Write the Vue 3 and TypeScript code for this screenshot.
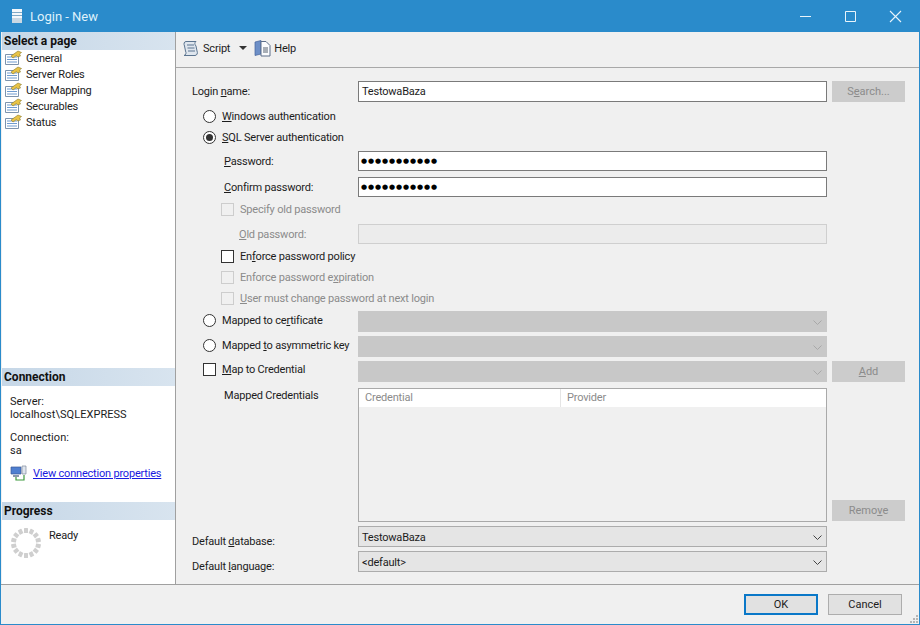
<script setup lang="ts">
const pages = ['General', 'Server Roles', 'User Mapping', 'Securables', 'Status']
const dots = '●●●●●●●●●●●'

// ring of small squares for the idle progress spinner
const spinner = Array.from({ length: 14 }, (_, i) => (360 / 14) * i)
</script>

<template>
  <div class="window">
    <header class="titlebar">
      <svg class="title-icon" width="14" height="16" viewBox="0 0 14 16">
        <path d="M2 1h10v14H2z" fill="#f4f8fb" />
        <path d="M2 4.5h10M2 7.5h10" stroke="#7fa9c6" stroke-width="1" />
        <path d="M2 10h10v5H2z" fill="#c9d8e3" />
      </svg>
      <span class="title-text">Login - New</span>
      <div class="win-buttons">
        <svg width="45" height="30" viewBox="0 0 45 30"><path d="M17 15.5h11" stroke="#e8f4fb" /></svg>
        <svg width="45" height="30" viewBox="0 0 45 30"><path d="M17.5 10.5h10v10h-10z" fill="none" stroke="#e8f4fb" /></svg>
        <svg width="45" height="30" viewBox="0 0 45 30"><path d="M17 10l11 11M28 10L17 21" stroke="#e8f4fb" stroke-width="1.1" /></svg>
      </div>
    </header>

    <div class="body">
      <aside class="sidebar">
        <div class="side-head">Select a page</div>
        <ul class="page-list">
          <li v-for="p in pages" :key="p">
            <svg width="17" height="16" viewBox="0 0 17 16">
              <path d="M.5 4.500h13v10H.5z" fill="#fff" stroke="#7d93ad" />
              <path d="M2 7h10M2 9.500h10M2 12h10" stroke="#6f9bd0" />
              <path d="M6 6l7-5 3.500 1.500-2 1.500 1 2-3 1-1-1.500L8 8z" fill="#e8c347" stroke="#8c7a2c" stroke-width=".6" />
            </svg>
            <span>{{ p }}</span>
          </li>
        </ul>

        <div class="side-head">Connection</div>
        <div class="conn">
          <div class="conn-group">Server:<br />localhost\SQLEXPRESS</div>
          <div class="conn-group">Connection:<br />sa</div>
          <div class="conn-link">
            <svg width="17" height="17" viewBox="0 0 17 17">
              <path d="M1 2h10v7H1z" fill="#4f7fd0" stroke="#3a5a9a" stroke-width=".7" />
              <path d="M3 10h6v2H3z" fill="#8a97ab" />
              <path d="M12 1h4v8h-4z" fill="#dfe5ee" stroke="#7e8a9c" stroke-width=".7" />
              <path d="M6 12v3h8v-5" fill="none" stroke="#3c9a3c" stroke-width="1.200" />
            </svg>
            <a class="link">View connection properties</a>
          </div>
        </div>

        <div class="side-head">Progress</div>
        <div class="progress">
          <svg width="32" height="32" viewBox="0 0 32 32">
            <rect
              v-for="a in spinner"
              :key="a"
              x="14"
              y="1"
              width="4"
              height="5"
              rx=".5"
              fill="#cfcfcf"
              :transform="`rotate(${a} 16 16)`"
            />
          </svg>
          <span class="ready">Ready</span>
        </div>
      </aside>

      <main class="main">
        <div class="toolbar">
          <svg width="17" height="17" viewBox="0 0 17 17">
            <path d="M4 1.500h10c-1.500 1-1.500 3 0 4.500l1 5c1 2 0 4.500-2 4.500H2c2-.5 2.500-2.500 1.500-4.500l-1-5C1.500 4 2 1.500 4 1.500z" fill="#dfe6ee" stroke="#5c7590" />
            <path d="M5 5h7M5.500 8h7M6 11h7" stroke="#5c7590" />
          </svg>
          <span class="tool-label">Script</span>
          <svg class="caret" width="8" height="4" viewBox="0 0 8 4"><path d="M0 0h8L4 4z" fill="#333" /></svg>
          <svg class="help-icon" width="17" height="17" viewBox="0 0 17 17">
            <path d="M1 2l6-1.500V14l-6 1.500z" fill="#6d8fc7" stroke="#43639c" stroke-width=".7" />
            <path d="M7 1.500h5l4 4v10.500H7z" fill="#fbfcfe" stroke="#5d6f8a" />
            <path d="M9 8h5M9 10h5M9 12h5" stroke="#54606f" />
          </svg>
          <span class="tool-label help-label">Help</span>
        </div>

        <form class="form" @submit.prevent>
          <div class="row h21">
            <label>Login <u>n</u>ame:</label>
            <div class="input">TestowaBaza</div>
            <button class="btn off" type="button">S<u>e</u>arch...</button>
          </div>
          <div class="row mt4">
            <label class="opt"><i class="radio" /><span><u>W</u>indows authentication</span></label>
          </div>
          <div class="row mt1">
            <label class="opt"><i class="radio on" /><span><u>S</u>QL Server authentication</span></label>
          </div>
          <div class="row mt4">
            <label class="in1"><u>P</u>assword:</label>
            <div class="input dots">{{ dots }}</div>
          </div>
          <div class="row mt6">
            <label class="in1"><u>C</u>onfirm password:</label>
            <div class="input dots">{{ dots }}</div>
          </div>
          <div class="row mt2">
            <label class="opt in1 dim"><i class="check dis" /><span>Specify old password</span></label>
          </div>
          <div class="row mt5">
            <label class="in2 dim"><u>O</u>ld password:</label>
            <div class="input dis" />
          </div>
          <div class="row mt2">
            <label class="opt in1"><i class="check" /><span>En<u>f</u>orce password policy</span></label>
          </div>
          <div class="row mt1">
            <label class="opt in1 dim"><i class="check dis" /><span>Enforce password e<u>x</u>piration</span></label>
          </div>
          <div class="row mt1">
            <label class="opt in1 dim"><i class="check dis" /><span><u>U</u>ser must change password at next login</span></label>
          </div>
          <div class="row h21 mt3">
            <label class="opt up1"><i class="radio" /><span>Mapped to ce<u>r</u>tificate</span></label>
            <div class="select dis"><svg class="chev" width="9" height="5" viewBox="0 0 9 5"><path d="M.5.500l4 4 4-4" fill="none" stroke="#a8a8a8" /></svg></div>
          </div>
          <div class="row h21 mt4">
            <label class="opt up1"><i class="radio" /><span>Mapped <u>t</u>o asymmetric key</span></label>
            <div class="select dis"><svg class="chev" width="9" height="5" viewBox="0 0 9 5"><path d="M.5.500l4 4 4-4" fill="none" stroke="#a8a8a8" /></svg></div>
          </div>
          <div class="row h21 mt4">
            <label class="opt up2"><i class="check" /><span><u>M</u>ap to Credential</span></label>
            <div class="select dis"><svg class="chev" width="9" height="5" viewBox="0 0 9 5"><path d="M.5.500l4 4 4-4" fill="none" stroke="#a8a8a8" /></svg></div>
            <button class="btn off" type="button"><u>A</u>dd</button>
          </div>
          <div class="row creds mt6">
            <label class="in1 cred-label">Mapped Credentials</label>
            <div class="table">
              <div class="thead">
                <span class="th first">Credential</span>
                <span class="th">Provider</span>
              </div>
            </div>
            <button class="btn off remove" type="button">Remo<u>v</u>e</button>
          </div>
          <div class="row h21 mt4">
            <label class="down">Default <u>d</u>atabase:</label>
            <div class="select">TestowaBaza<svg class="chev" width="9" height="5" viewBox="0 0 9 5"><path d="M.5.500l4 4 4-4" fill="none" stroke="#444" /></svg></div>
          </div>
          <div class="row h21 mt4">
            <label class="down">Default <u>l</u>anguage:</label>
            <div class="select">&lt;default&gt;<svg class="chev" width="9" height="5" viewBox="0 0 9 5"><path d="M.5.500l4 4 4-4" fill="none" stroke="#444" /></svg></div>
          </div>
        </form>
      </main>
    </div>

    <footer class="footer">
      <button class="btn primary" type="button">OK</button>
      <button class="btn" type="button">Cancel</button>
      <svg class="grip" width="8" height="8" viewBox="0 0 8 8">
        <path d="M6 0h2v2H6zM3 3h2v2H3zM6 3h2v2H6zM0 6h2v2H0zM3 6h2v2H3zM6 6h2v2H6z" fill="#b5b5b5" />
      </svg>
    </footer>
  </div>
</template>

<style>
html,
body {
  margin: 0;
  background: #f0f0f0;
}
</style>

<style scoped>
.window {
  width: 920px;
  height: 625px;
  box-sizing: border-box;
  display: flex;
  flex-direction: column;
  border: 1px solid #2a8bcb;
  border-width: 0 1px 1px 1px;
  background: #f0f0f0;
  color: #1c1c1c;
  font: 11px/13px Roboto, "Liberation Sans", sans-serif;
  letter-spacing: -0.2px;
  overflow: hidden;
}

.titlebar {
  height: 32px;
  flex: none;
  display: flex;
  align-items: center;
  padding-left: 9px;
  background: #2a8bcb;
  color: #dff1fb;
  letter-spacing: 0;
}

.title-icon {
  margin-right: 6px;
}

.title-text {
  font-size: 13px;
}

.win-buttons {
  margin-left: auto;
  display: flex;
  padding-right: 1px;
}

.body {
  height: 552px;
  flex: none;
  display: flex;
}

.sidebar {
  width: 173px;
  flex: none;
  margin-left: 1px;
  background: #fff;
  border-right: 1px solid #a0a0a0;
  display: flex;
  flex-direction: column;
}

.side-head {
  height: 18px;
  flex: none;
  padding-left: 2px;
  line-height: 18px;
  font-size: 12px;
  font-weight: 700;
  letter-spacing: 0;
  color: #111;
  background: linear-gradient(90deg, #c6d7e7, #d8e4ef);
}

.page-list {
  list-style: none;
  margin: 0;
  padding: 0;
  height: 318px;
  flex: none;
}

.page-list li {
  height: 16px;
  display: flex;
  align-items: center;
  gap: 4px;
  padding-left: 3px;
}

.conn {
  height: 116px;
  flex: none;
  padding: 9px 0 0 8px;
  box-sizing: border-box;
}

.conn-group {
  margin-bottom: 10px;
  letter-spacing: 0.05px;
}

.conn-link {
  display: flex;
  align-items: center;
  gap: 6px;
  margin-top: -2px;
  white-space: nowrap;
}

.link {
  color: #1a1ae0;
  letter-spacing: -0.2px;
  text-decoration: underline;
}

.progress {
  display: flex;
  gap: 7px;
  padding: 7px 0 0 8px;
}

.ready {
  margin-top: 2px;
}

.main {
  flex: 1;
  min-width: 0;
  display: flex;
  flex-direction: column;
}

.toolbar {
  height: 36px;
  flex: none;
  box-sizing: border-box;
  display: flex;
  align-items: center;
  padding-left: 6px;
  padding-bottom: 3px;
  border-bottom: 1px solid #a8a8a8;
}

.tool-label {
  margin-left: 4px;
}

.help-label {
  margin-left: 3px;
}

.caret {
  margin-left: 9px;
}

.help-icon {
  margin-left: 7px;
}

.form {
  padding: 13px 0 0 16px;
  display: flex;
  flex-direction: column;
}

.row {
  display: grid;
  grid-template-columns: 166px 469px 73px;
  grid-template-rows: minmax(0, 1fr);
  height: 20px;
  align-items: center;
}

.h21 {
  height: 21px;
}

.mt1 { margin-top: 1px; }
.mt2 { margin-top: 2px; }
.mt3 { margin-top: 3px; }
.mt4 { margin-top: 4px; }
.mt5 { margin-top: 5px; }
.mt6 { margin-top: 6px; }

.up1 { margin-bottom: 2px; }
.up2 { margin-bottom: 4px; }
.down { margin-top: 10px; }

.row .btn {
  margin-left: 5px;
}

.opt {
  display: flex;
  align-items: center;
  gap: 6px;
  padding-left: 11px;
  white-space: nowrap;
}

.opt.in1 {
  padding-left: 29px;
}

.in1 {
  padding-left: 32px;
}

.in2 {
  padding-left: 47px;
}

.dim {
  color: #8b8b8b;
}

.radio,
.check {
  width: 13px;
  height: 13px;
  flex: none;
  box-sizing: border-box;
  border: 1px solid #333;
  background: #fff;
  display: block;
}

.radio {
  border-radius: 50%;
  position: relative;
}

.radio.on::after {
  content: "";
  position: absolute;
  inset: 2px;
  border-radius: 50%;
  background: #333;
}

.check.dis {
  border-color: #cdcdcd;
  background: #f0f0f0;
}

.input,
.select {
  height: 100%;
  box-sizing: border-box;
  border: 1px solid #7a7a7a;
  background: #fff;
  padding-left: 3px;
  line-height: 19px;
  white-space: nowrap;
}

.input.dis {
  border-color: #cfcfcf;
  background: #ececec;
}

.dots {
  font: 7px/18px "DejaVu Sans", sans-serif;
  letter-spacing: 0.9px;
  padding-left: 2px;
  color: #000;
}

.select {
  display: flex;
  align-items: center;
  justify-content: space-between;
  padding-top: 1px;
  padding-right: 4px;
  border-color: #acacac;
  background: #e5e5e5;
}

.select.dis {
  justify-content: flex-end;
  border-color: #c8c8c8;
  background: #c8c8c8;
}

.btn {
  width: 73px;
  height: 21px;
  box-sizing: border-box;
  padding: 0;
  border: 1px solid #adadad;
  background: #e1e1e1;
  color: #1c1c1c;
  font: inherit;
}

.btn.off {
  border-color: #cccccc;
  background: #cccccc;
  color: #8b8b8b;
}

.footer .btn {
  width: 74px;
}

.btn.primary {
  border: 2px solid #0a78c8;
}

.creds {
  height: 134px;
  align-items: start;
}

.cred-label {
  margin-top: 1px;
}

.table {
  height: 134px;
  box-sizing: border-box;
  border: 1px solid #a9a9a9;
  background: #f0f0f0;
}

.thead {
  height: 18px;
  display: flex;
  background: #fff;
  color: #8b8b8b;
  line-height: 18px;
}

.th {
  padding-left: 6px;
}

.th.first {
  width: 195px;
  border-right: 1px solid #e5e5e5;
}

.remove {
  align-self: end;
  margin-bottom: 1px;
}

.footer {
  flex: 1;
  display: flex;
  justify-content: flex-end;
  align-items: flex-start;
  gap: 10px;
  padding: 9px 17px 0 0;
  border-top: 1px solid #a0a0a0;
  position: relative;
}

.grip {
  position: absolute;
  right: 1px;
  bottom: 1px;
}
</style>
